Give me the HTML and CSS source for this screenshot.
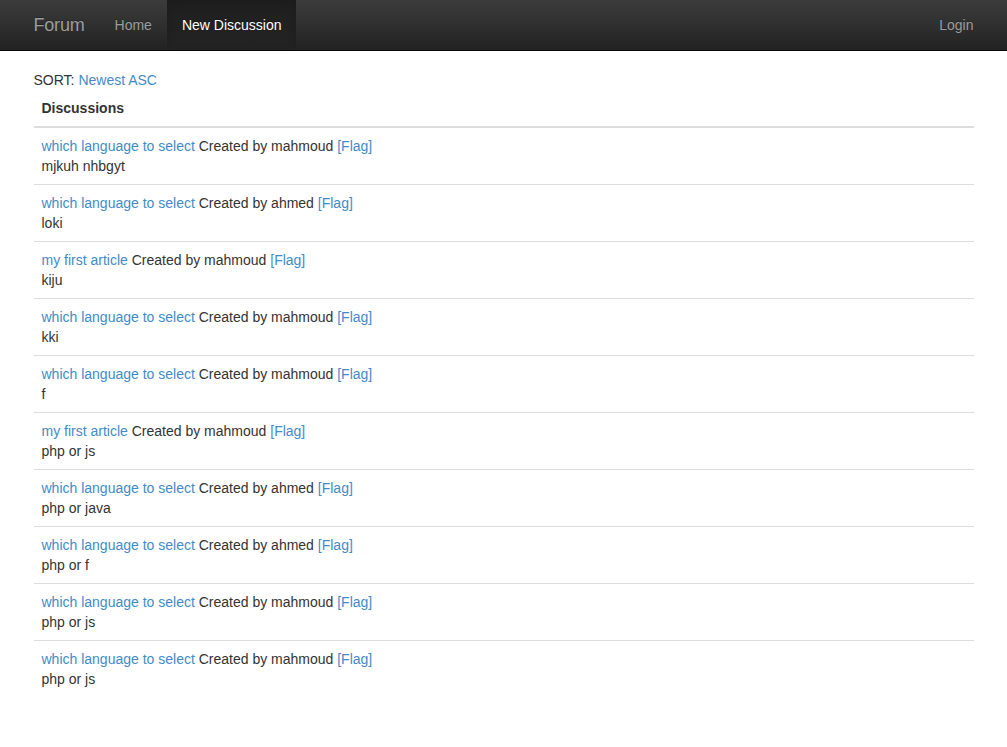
FILE: index.html
```html
<!DOCTYPE html>
<html>
<head>
<meta charset="utf-8">
<title>Forum</title>
<link rel="stylesheet" href="styles.css">
</head>
<body>
<nav class="navbar">
  <div class="container nav-inner">
    <a class="brand" href="#">Forum</a>
    <ul class="nav">
      <li><a href="#">Home</a></li>
      <li class="active"><a href="#">New Discussion</a></li>
    </ul>
    <ul class="nav nav-right">
      <li><a href="#">Login</a></li>
    </ul>
  </div>
</nav>
<main class="container">
  <div class="sort">SORT: <a href="#">Newest ASC</a></div>
  <table class="table">
    <thead><tr><th>Discussions</th></tr></thead>
    <tbody>
      <tr><td><a href="#">which language to select</a> Created by mahmoud <a href="#">[Flag]</a><br>mjkuh nhbgyt</td></tr>
      <tr><td><a href="#">which language to select</a> Created by ahmed <a href="#">[Flag]</a><br>loki</td></tr>
      <tr><td><a href="#">my first article</a> Created by mahmoud <a href="#">[Flag]</a><br>kiju</td></tr>
      <tr><td><a href="#">which language to select</a> Created by mahmoud <a href="#">[Flag]</a><br>kki</td></tr>
      <tr><td><a href="#">which language to select</a> Created by mahmoud <a href="#">[Flag]</a><br>f</td></tr>
      <tr><td><a href="#">my first article</a> Created by mahmoud <a href="#">[Flag]</a><br>php or js</td></tr>
      <tr><td><a href="#">which language to select</a> Created by ahmed <a href="#">[Flag]</a><br>php or java</td></tr>
      <tr><td><a href="#">which language to select</a> Created by ahmed <a href="#">[Flag]</a><br>php or f</td></tr>
      <tr><td><a href="#">which language to select</a> Created by mahmoud <a href="#">[Flag]</a><br>php or js</td></tr>
      <tr><td><a href="#">which language to select</a> Created by mahmoud <a href="#">[Flag]</a><br>php or js</td></tr>
    </tbody>
  </table>
</main>
</body>
</html>
```
FILE: styles.css
```css
* { box-sizing: border-box; }
html, body { margin: 0; padding: 0; }
body {
  font-family: "Liberation Sans", Arial, sans-serif;
  font-size: 14px;
  line-height: 20px;
  color: #333;
  background: #fff;
}
a { color: #428bca; text-decoration: none; }
.container {
  width: 970px;
  margin: 0 auto;
  padding: 0 15px;
}
.navbar {
  height: 51px;
  background-image: linear-gradient(to bottom, #3c3c3c 0, #222 100%);
  border-bottom: 1px solid #080808;
  margin-bottom: 19px;
}
.nav-inner {
  display: flex;
  height: 50px;
}
.brand {
  margin-left: -15px;
  padding: 15px;
  font-size: 18px;
  line-height: 20px;
  height: 50px;
  color: #9d9d9d;
  letter-spacing: -0.2px;
  text-shadow: 0 -1px 0 rgba(0,0,0,.25);
}
.nav {
  list-style: none;
  margin: 0;
  padding: 0;
  display: flex;
}
.nav li a {
  display: block;
  padding: 15px;
  line-height: 20px;
  height: 50px;
  color: #9d9d9d;
  text-shadow: 0 -1px 0 rgba(0,0,0,.25);
}
.nav li.active a {
  color: #fff;
  background-image: linear-gradient(to bottom, #1f1f1f 0, #232323 100%);
  box-shadow: inset 0 3px 9px rgba(0,0,0,.12);
}
.nav-right {
  margin-left: auto;
  margin-right: -15px;
}
.sort { line-height: 20px; }
.table {
  width: 100%;
  border-collapse: collapse;
  border-spacing: 0;
}
.table th {
  text-align: left;
  font-weight: bold;
  padding: 8px;
  border-bottom: 2px solid #ddd;
}
.table td {
  padding: 8px;
  border-top: 1px solid #ddd;
  vertical-align: top;
}
.table tbody tr:first-child td { border-top: 0; }
```
